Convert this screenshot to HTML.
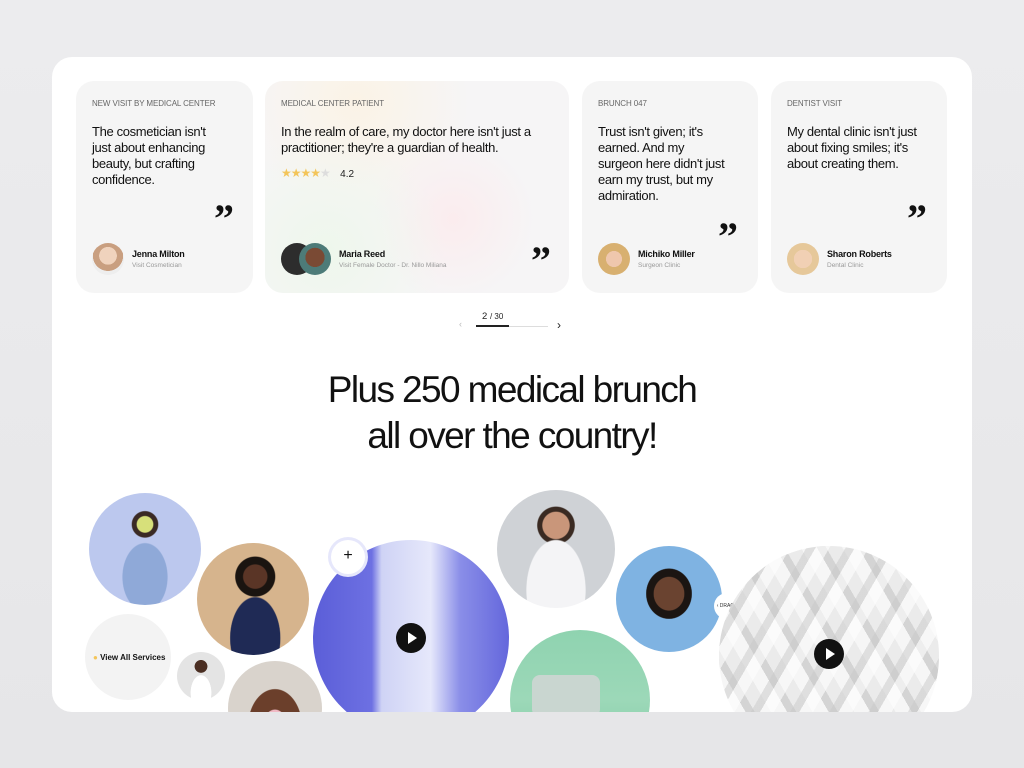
<!DOCTYPE html>
<html><head><meta charset="utf-8"><style>
*{margin:0;padding:0;box-sizing:border-box}
body{width:1024px;height:768px;overflow:hidden;background:linear-gradient(180deg,#ececee,#e6e6e8);font-family:"Liberation Sans",sans-serif;color:#111;position:relative}
.panel{position:absolute;left:52px;top:57px;width:920px;height:655px;background:#fff;border-radius:20px;overflow:hidden}
.card{position:absolute;top:24px;height:212px;background:#f5f5f5;border-radius:18px;padding:18px 16px}
.tag{font-size:8px;color:#666;letter-spacing:-.1px;text-transform:uppercase}
.q{font-size:13px;line-height:16px;margin-top:16px;letter-spacing:-.35px;color:#111;white-space:nowrap}
.qm{position:absolute;font-size:40px;font-weight:bold;font-family:"Liberation Serif",serif;line-height:1}
.person{position:absolute;left:16px;bottom:18px;display:flex;align-items:center}
.av{width:32px;height:32px;border-radius:50%;background:radial-gradient(circle at 50% 40%,#f0d3bd 0 35%,#c99f80 36% 60%,#eee 61%)}
.nm{margin-left:8px}
.nm b{display:block;font-size:9px;font-weight:bold;letter-spacing:-.2px}
.nm span{display:block;font-size:6.5px;color:#999;margin-top:3px}
.c{position:absolute;border-radius:50%;overflow:hidden}
.play{position:absolute;width:30px;height:30px;border-radius:50%;background:#111}
.play:after{content:"";position:absolute;left:12px;top:9px;border-left:9px solid #fff;border-top:6px solid transparent;border-bottom:6px solid transparent}
h1{position:absolute;left:0;width:920px;top:310px;text-align:center;font-weight:normal;font-size:37px;line-height:46px;letter-spacing:-1.6px;color:#111}
</style></head><body>
<div class="panel">
 <div class="card" style="left:24px;width:177px">
  <div class="tag">New visit by medical center</div>
  <div class="q">The cosmetician isn't<br>just about enhancing<br>beauty, but crafting<br>confidence.</div>
  <div class="qm" style="left:138px;top:118px">”</div>
  <div class="person"><div class="av"></div><div class="nm"><b>Jenna Milton</b><span>Visit Cosmetician</span></div></div>
 </div>
 <div class="card" style="left:213px;width:304px;background:radial-gradient(circle at 20% 80%,#eef7ec 0,transparent 40%),radial-gradient(circle at 62% 65%,#fbecee 0,transparent 35%),radial-gradient(circle at 30% 10%,#fbf3e6 0,transparent 40%),#f6f5f6">
  <div class="tag">Medical center patient</div>
  <div class="q">In the realm of care, my doctor here isn't just a<br>practitioner; they're a guardian of health.</div>
  <div style="margin-top:10px;font-size:12px;color:#f3c55a;letter-spacing:-1px">★★★★<span style="color:#ddd">★</span> <span style="color:#222;font-size:10px;letter-spacing:0;margin-left:8px">4.2</span></div>
  <div class="qm" style="left:266px;top:160px">”</div>
  <div class="person"><div class="av" style="background:#2d2d2d"></div><div class="av" style="margin-left:-14px;background:radial-gradient(circle at 50% 45%,#7a4a34 0 40%,#4d7b78 41%)"></div><div class="nm"><b>Maria Reed</b><span>Visit Female Doctor - Dr. Nillo Miliana</span></div></div>
 </div>
 <div class="card" style="left:530px;width:176px">
  <div class="tag">Brunch 047</div>
  <div class="q">Trust isn't given; it's<br>earned. And my<br>surgeon here didn't just<br>earn my trust, but my<br>admiration.</div>
  <div class="qm" style="left:136px;top:136px">”</div>
  <div class="person"><div class="av" style="background:radial-gradient(circle at 50% 50%,#efc7ad 0 35%,#d8b070 36%)"></div><div class="nm"><b>Michiko Miller</b><span>Surgeon Clinic</span></div></div>
 </div>
 <div class="card" style="left:719px;width:176px">
  <div class="tag">Dentist visit</div>
  <div class="q">My dental clinic isn't just<br>about fixing smiles; it's<br>about creating them.</div>
  <div class="qm" style="left:136px;top:118px">”</div>
  <div class="person"><div class="av" style="background:radial-gradient(circle at 50% 50%,#f1d0b4 0 40%,#e6c89a 41%)"></div><div class="nm"><b>Sharon Roberts</b><span>Dental Clinic</span></div></div>
 </div>
 <div style="position:absolute;left:407px;top:262px;font-size:9px;color:#bbb">‹</div>
 <div style="position:absolute;left:430px;top:254px;font-size:9.5px;color:#222">2 <span style="font-size:8px">/ 30</span></div>
 <div style="position:absolute;left:424px;top:269px;width:72px;height:1px;background:#ddd"></div>
 <div style="position:absolute;left:424px;top:268px;width:33px;height:2px;background:#222"></div>
 <div style="position:absolute;left:505px;top:261px;font-size:12px;color:#222">›</div>
 <h1>Plus 250 medical brunch<br>all over the country!</h1>

 <div class="c" style="left:37px;top:436px;width:112px;height:112px;background:radial-gradient(ellipse at 50% 75%,#8fa9d8 0 28%,transparent 29%),radial-gradient(circle at 50% 28%,#d7e07a 0 8%,#3a2a25 9% 13%,transparent 14%),#bcc8ee"></div>
 <div class="c" style="left:145px;top:486px;width:112px;height:112px;background:radial-gradient(ellipse at 52% 85%,#1f2a55 0 30%,transparent 31%),radial-gradient(circle at 52% 30%,#5a3526 0 12%,#1a1410 13% 20%,transparent 21%),#d6b48d"></div>
 <div class="c" style="left:33px;top:557px;width:86px;height:86px;background:#f3f3f3"><div style="position:absolute;left:8px;top:39px;font-size:8px;font-weight:bold;white-space:nowrap"><span style="color:#f3c55a">●</span> View All Services</div></div>
 <div class="c" style="left:125px;top:595px;width:48px;height:48px;background:radial-gradient(ellipse at 50% 85%,#fff 0 30%,transparent 31%),radial-gradient(circle at 50% 30%,#4a2e22 0 15%,transparent 16%),#e4e4e4"></div>
 <div class="c" style="left:176px;top:604px;width:94px;height:94px;background:radial-gradient(ellipse at 50% 70%,#f0b9c4 0 18%,#6b3f2b 19% 40%,transparent 41%),#d9d3cc"></div>
 <div class="c" style="left:261px;top:483px;width:196px;height:196px;background:linear-gradient(90deg,#5b5ed8 0,#6d70e2 30%,#cfd3f5 35%,#e6e8fb 60%,#8a8ee8 75%,#6467dc 100%)"><div class="play" style="left:83px;top:83px"></div></div>
 <div style="position:absolute;left:279px;top:483px;width:34px;height:34px;border-radius:50%;background:#fff;box-shadow:0 0 0 3px #e6e7fb;text-align:center;line-height:32px;font-size:16px">+</div>
 <div class="c" style="left:445px;top:433px;width:118px;height:118px;background:radial-gradient(ellipse at 50% 85%,#f4f4f6 0 35%,transparent 36%),radial-gradient(circle at 50% 30%,#c9967a 0 13%,#3a2a22 14% 18%,transparent 19%),#cfd2d6"></div>
 <div class="c" style="left:458px;top:573px;width:140px;height:140px;background:linear-gradient(180deg,#8fd3b0 0,#9cd8b8 50%,#7fcaa3 100%)"><div style="position:absolute;left:22px;top:45px;width:68px;height:42px;border-radius:8px;background:#c9d6d0"></div></div>
 <div class="c" style="left:564px;top:489px;width:106px;height:106px;background:radial-gradient(ellipse at 50% 45%,#6a4330 0 20%,#1b1512 21% 30%,transparent 31%),#7fb3e2"></div>
 <div style="position:absolute;left:662px;top:536px;width:26px;height:26px;border-radius:50%;background:#fff;font-size:5px;line-height:26px;text-align:center;color:#333">‹ DRAG ›</div>
 <div class="c" style="left:667px;top:489px;width:220px;height:220px;background:repeating-linear-gradient(60deg,#f6f6f6 0 14px,#d4d4d4 14px 22px,#ebebeb 22px 36px),#e6e6e6"><div style="position:absolute;inset:0;background:repeating-linear-gradient(-60deg,rgba(255,255,255,.6) 0 12px,rgba(200,200,200,.5) 12px 20px,transparent 20px 34px)"></div><div class="play" style="left:95px;top:93px"></div></div>
</div>
</body></html>
